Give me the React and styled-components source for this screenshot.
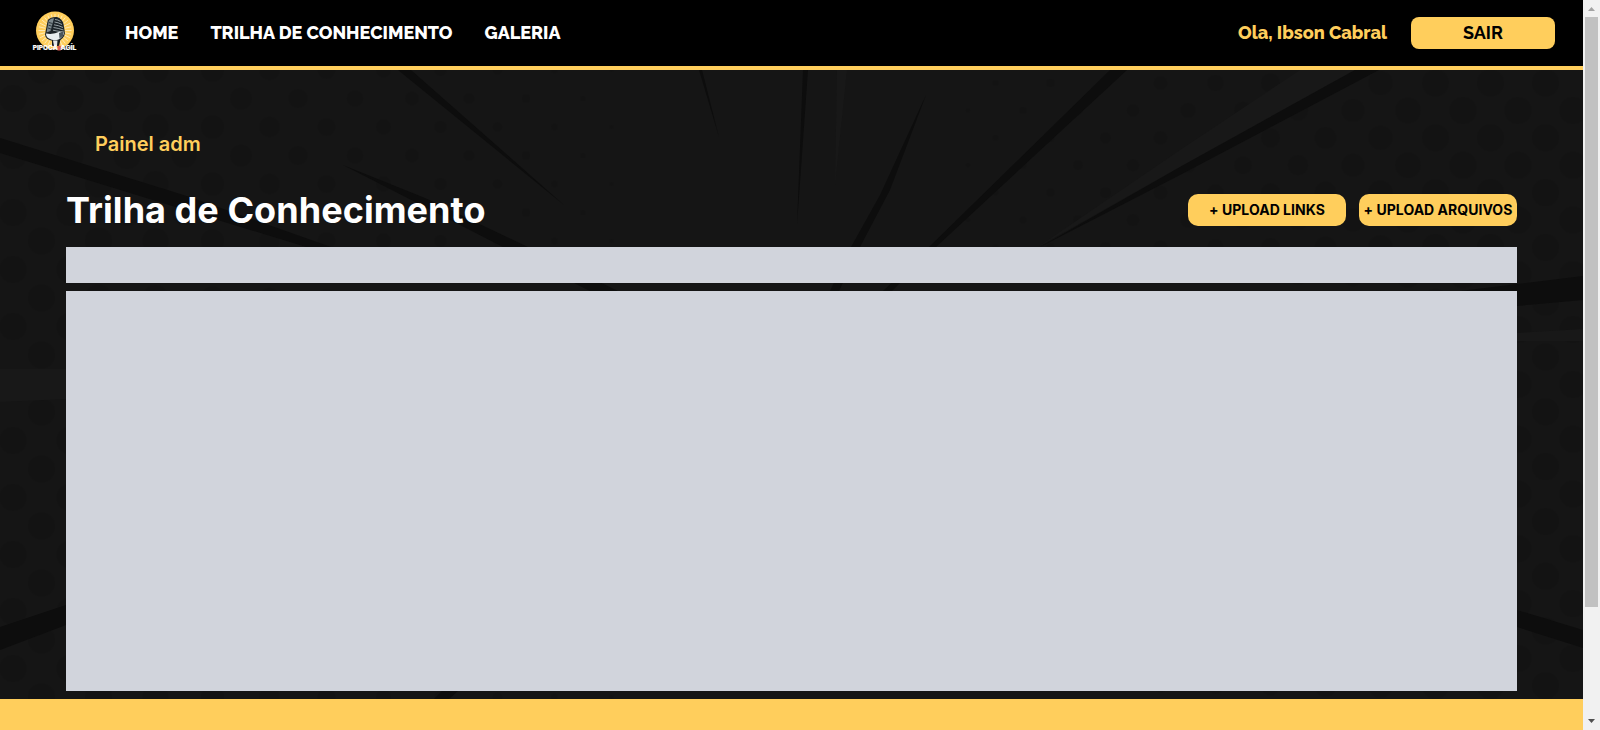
import React from "react";
import styled, { createGlobalStyle } from "styled-components";

const GOLD = "#ffce5c";

const GlobalStyle = createGlobalStyle`
  * { box-sizing: border-box; }
  body { margin: 0; background: #151515; overflow: hidden; }
  button { border: 0; padding: 0; cursor: pointer; }
`;

const Viewport = styled.div`
  display: flex;
  height: 730px;
  overflow: hidden;
  font-family: Inter, "Liberation Sans", sans-serif;
`;

const Page = styled.div`
  flex: 1;
  min-width: 0;
  display: flex;
  flex-direction: column;
`;

const Header = styled.header`
  height: 70px;
  flex: none;
  display: flex;
  align-items: center;
  padding: 0 28px 0 32px;
  background: #000;
  border-bottom: 4px solid ${GOLD};
  font-family: Raleway, Lato, sans-serif;
  font-weight: 700;
  font-size: 18px;
  line-height: 28px;
`;

const Logo = styled.svg`
  width: 46px;
  height: 46px;
  flex: none;
`;

const Nav = styled.nav`
  display: flex;
  flex: 1;
  gap: 32px;
  margin-left: 47px;
  font-weight: 800;
`;

const NavLink = styled.a`
  color: #fff;
  white-space: nowrap;
`;

const Greeting = styled.span`
  width: 150px;
  margin-right: 23px;
  color: ${GOLD};
  font-weight: 800;
  white-space: nowrap;
`;

const Button = styled.button`
  width: ${(p) => p.$width}px;
  height: 32px;
  border-radius: ${(p) => p.$radius}px;
  background: ${GOLD};
  color: #000;
  font: inherit;
  white-space: nowrap;
`;

const ActionButton = styled(Button)`
  padding-bottom: 2px;
  letter-spacing: 0.03px;
`;

const Main = styled.main`
  position: relative;
  flex: none;
  height: 629px;
  padding: 60px 66px 8px;
  background: #151515;
`;

const Backdrop = styled.svg`
  position: absolute;
  inset: 0;
  width: 100%;
  height: 100%;
`;

const Content = styled.div`
  position: relative;
  display: flex;
  flex-direction: column;
`;

const PanelLabel = styled.p`
  margin: 0 0 0 29px;
  color: ${GOLD};
  font-size: 20px;
  font-weight: 600;
  line-height: 28px;
`;

const TitleRow = styled.div`
  display: flex;
  align-items: center;
  justify-content: space-between;
  height: 40px;
  margin: 32px 0 17px;
`;

const Title = styled.h1`
  margin: 0;
  color: #fff;
  font-size: 36px;
  font-weight: 700;
  line-height: 40px;
  letter-spacing: 0.05px;
`;

const Actions = styled.div`
  display: flex;
  gap: 13px;
  font-size: 14px;
  font-weight: 700;
`;

const Panel = styled.section`
  height: ${(p) => p.$height}px;
  background: #d1d4dc;
  & + & { margin-top: 8px; }
`;

const Footer = styled.footer`
  flex: 1;
  background: ${GOLD};
`;

const Scrollbar = styled.div`
  width: 17px;
  display: flex;
  flex-direction: column;
  align-items: center;
  background: #f1f1f1;
`;

const ScrollArrow = styled.svg`
  width: 17px;
  height: 17px;
  flex: none;
  fill: ${(p) => p.$color};
`;

const Thumb = styled.div`
  width: 13px;
  height: 590px;
  background: #c1c1c1;
`;

const Track = styled.div`
  flex: 1;
`;

const makeDots = () => {
  const dots = [];
  for (let row = 0; row < 23; row++) {
    for (let col = 0; col < 12; col++) {
      const x = 13 + col * 57 + (row % 2 ? 0 : 28.5);
      const r = 13.5 * Math.min(1, (690 - x) / 560);
      if (r > 1.5) dots.push([x, row * 28.5, r]);
    }
    for (let col = 0; col < 12; col++) {
      const x = 1573 - col * 55 - (row % 2 ? 0 : 27.5);
      const r = 13.5 * Math.min(1, (x - 880) / 560);
      if (r > 1.5) dots.push([x, 13 + row * 27.4, r]);
    }
  }
  return dots;
};

const DOTS = makeDots();

const LIGHT_RAYS = [
  "837,70 847,70 835,185",
  "1300,70 1355,70 1180,167 1038,247 1180,150",
  "0,369 66,369 66,399 0,402",
  "1517,333 1583,329 1583,341 1517,341",
];

const DARK_RAYS = [
  "0,138 0,153 306,247 331,247 190,197",
  "398,70 411,70 564,205",
  "343,165 503,247 590,291 618,291 528,247 425,198",
  "699,70 702,70 719,137",
  "803,70 808,70 797,225",
  "926,95 880,195 851,247 830,291 839,291 860,247 890,190",
  "1110,70 1127,70 936,247 892,291 883,291 929,247",
  "1355,70 1379,70 1180,175 1040,247 1180,167",
  "1460,291 1583,276 1583,300 1517,306 1517,291",
  "1517,610 1583,630 1583,648 1517,627",
  "0,627 66,605 66,625 0,650",
  "442,691 458,691 449,699 434,699",
];

const Sunburst = () => (
  <Backdrop viewBox="0 70 1583 629" preserveAspectRatio="none" aria-hidden="true">
    <g fill="#0f0f0f" opacity="0.17" transform="translate(0 70)">
      {DOTS.map(([x, y, r]) => (
        <circle key={`${x}-${y}`} cx={x} cy={y} r={r} />
      ))}
    </g>
    <g fill="#181818">
      {LIGHT_RAYS.map((points) => <polygon key={points} points={points} />)}
    </g>
    <g fill="#0d0d0d">
      {DARK_RAYS.map((points) => <polygon key={points} points={points} />)}
    </g>
  </Backdrop>
);

const BrandLogo = () => (
  <Logo viewBox="32 10 46 46" aria-label="Pipoca Ágil">
    <circle cx="55" cy="30.5" r="19" fill={GOLD} />
    <g stroke="#fff1cb" strokeWidth="0.8">
      {Array.from({ length: 28 }, (_, i) => {
        const a = (i * Math.PI) / 14;
        return (
          <line
            key={i}
            x1={55 + 10 * Math.cos(a)}
            y1={30.5 + 10 * Math.sin(a)}
            x2={55 + 16.5 * Math.cos(a)}
            y2={30.5 + 16.5 * Math.sin(a)}
          />
        );
      })}
    </g>
    <path d="M52 39 L61 37 L59 46 L52 46 Z" fill="#15191c" />
    <path d="M47.8 20 Q51 16.5 57 17 Q62 18.5 63.5 24 L65 33 Q64 39 58 41 L51 40.5 Q45.5 39 45 34.5 Z" fill="#1c2429" />
    <path d="M48.8 20.5 Q51 18.2 54 18.3 L50.5 31 L46.5 32.5 Z" fill="#7d898e" />
    <path d="M46 33.5 Q53 35 60 31.5 L64.3 31.5 Q64 37 58 39.8 Q53 41 49 38.5 Q46 37 46 33.5 Z" fill="#e8eef0" />
    <path d="M59 33 L64 31 L63 36 L59.5 38.5 Z" fill="#4b565c" />
    <g stroke="#b4bfc3" strokeWidth="0.8" fill="none">
      <path d="M55 19.5 Q58 19.5 60.5 21.5 M54.5 22 Q58 22.4 62 24.5 M54 24.8 Q58.5 25.3 63 27.5 M53.5 27.5 Q58 28 63.5 30 M53 30.2 Q57 31 60 31.5" />
      <path d="M49 22.5 L52.5 23.5 M48.5 25.2 L51.8 26.2 M48 28 L51 29" stroke="#20282c" />
    </g>
    <path d="M53 40.5 L57.5 40.5 L57 46 L54 46 Z" fill="#e5e8e8" />
    <rect x="57.3" y="45.8" width="3.5" height="4.8" rx="0.7" fill="#db5d54" />
    <g fill="#fff" stroke="#fff" strokeWidth="0.2" fontFamily="Inter, sans-serif" fontWeight="800" fontSize="6.5">
      <text x="32.8" y="50" textLength="24.8" lengthAdjust="spacingAndGlyphs">PIPOCA</text>
      <text x="60.6" y="50" textLength="15.6" lengthAdjust="spacingAndGlyphs">AGÍL</text>
    </g>
  </Logo>
);

export default function App() {
  return (
    <>
      <GlobalStyle />
      <Viewport>
        <Page>
          <Header>
            <BrandLogo />
            <Nav>
              <NavLink>HOME</NavLink>
              <NavLink>TRILHA DE CONHECIMENTO</NavLink>
              <NavLink>GALERIA</NavLink>
            </Nav>
            <Greeting>Ola, Ibson Cabral</Greeting>
            <Button $width={144} $radius={8}>SAIR</Button>
          </Header>
          <Main>
            <Sunburst />
            <Content>
              <PanelLabel>Painel adm</PanelLabel>
              <TitleRow>
                <Title>Trilha de Conhecimento</Title>
                <Actions>
                  <ActionButton $width={158} $radius={10}>+ UPLOAD LINKS</ActionButton>
                  <ActionButton $width={158} $radius={10}>+ UPLOAD ARQUIVOS</ActionButton>
                </Actions>
              </TitleRow>
              <Panel $height={36} />
              <Panel $height={400} />
            </Content>
          </Main>
          <Footer />
        </Page>
        <Scrollbar>
          <ScrollArrow $color="#a3a3a3" viewBox="0 0 17 17"><path d="M5 11 L8.5 7 L12 11 Z" /></ScrollArrow>
          <Thumb />
          <Track />
          <ScrollArrow $color="#505050" viewBox="0 0 17 17"><path d="M5 6 L12 6 L8.5 10 Z" /></ScrollArrow>
        </Scrollbar>
      </Viewport>
    </>
  );
}
